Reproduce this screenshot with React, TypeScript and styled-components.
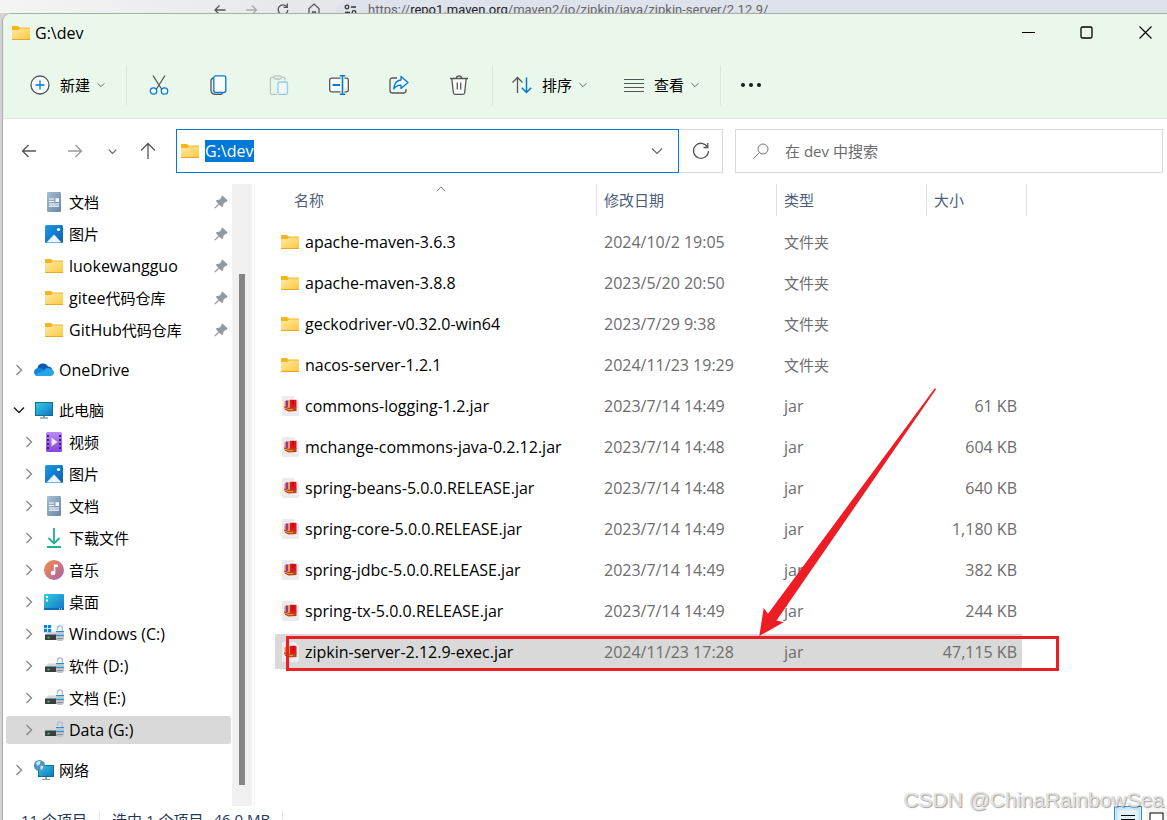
import React from 'react';
import styled, { createGlobalStyle } from 'styled-components';

const Global = createGlobalStyle`
  * { box-sizing: border-box; }
  body { margin: 0; }
  body, button, input {
    font-family: "Open Sans", "Noto Sans CJK SC", sans-serif;
    font-size: 16px;
    color: #000;
  }
  button { border: 0; background: none; padding: 0; }
`;

const blue = '#0078d4';

/* ---------- layout ---------- */

const Desktop = styled.div`
  position: relative;
  height: 100vh;
  overflow: hidden;
  background: #d3d3d3;
`;

const BrowserStrip = styled.div`
  display: flex;
  align-items: flex-start;
  height: 13px;
  overflow: hidden;
  padding-left: 212px;
  background: linear-gradient(90deg, #f4f4f4, #e6e7ea 320px);
`;

const BrowserIcon = styled.span`
  display: flex;
  flex: none;
  width: 31px;
  height: 18px;
`;

const BrowserAddress = styled.div`
  display: flex;
  flex: 1;
  align-items: flex-start;
  gap: 8px;
  padding-left: 6px;
  height: 24px;
  border-radius: 12px 0 0 12px;
  background: #dee2eb;
`;

const BrowserUrl = styled.span`
  font-family: Roboto, sans-serif;
  font-size: 13px;
  line-height: 20px;
  color: #666;
  b { font-weight: 400; color: #222; }
`;

const Window = styled.main`
  display: flex;
  flex-direction: column;
  min-height: 100vh;
  margin-left: 2px;
  border: 1px solid #a9aeaa;
  border-right: 0;
  border-radius: 9px 0 0 0;
  background: #fff;
  overflow: hidden;
`;

const TitleBar = styled.header`
  display: flex;
  align-items: center;
  height: 37px;
  padding-left: 9px;
  gap: 5px;
  background: #eaf8eb;
`;

const Title = styled.h1`
  flex: 1;
  margin: 0;
  font-size: 16px;
  font-weight: 400;
  line-height: 22px;
`;

const CaptionButtons = styled.div`
  display: flex;
`;

const CaptionButton = styled.button`
  display: grid;
  place-items: center;
  width: 58px;
  height: 36px;
  &:last-child { width: 52px; padding-left: 8px; }
`;

const Toolbar = styled.div`
  display: flex;
  align-items: center;
  height: 68px;
  padding-left: 10px;
  background: #eaf8eb;
  border-bottom: 1px solid #dbe8dc;
`;

const MenuButton = styled.button`
  display: flex;
  align-items: center;
  height: 40px;
  padding: 0 18px 0 17px;
  & + & { margin-left: 2px; }
`;

const MenuLabel = styled.span`
  margin: 0 7px 0 10px;
  font-size: 15px;
`;

const ToolButton = styled.button<{ $narrow?: boolean }>`
  display: grid;
  place-items: center;
  width: ${p => (p.$narrow ? 56 : 60)}px;
  height: 40px;
`;

const Separator = styled.span`
  width: 1px;
  height: 40px;
  margin: 0 2px 0 3px;
  background: #d9e6da;
`;

const NavBar = styled.div`
  display: flex;
  align-items: center;
  padding: 10px 4px 11px 5px;
`;

const NavButton = styled.button<{ $width: number }>`
  display: grid;
  place-items: center;
  width: ${p => p.$width}px;
  height: 40px;
`;

const AddressBox = styled.div`
  display: flex;
  flex: 503 1 503px;
  align-items: center;
  height: 44px;
  margin-left: 4px;
  padding: 0 15px 0 4px;
  border: 1px solid ${blue};
`;

const AddressInput = styled.input`
  width: 49px;
  height: 22px;
  margin: 0 auto 0 6px;
  padding: 0;
  border: 0;
  outline: 0;
  color: #fff;
  background: #0078d7;
`;

const RefreshButton = styled.button`
  display: grid;
  place-items: center;
  width: 44px;
  height: 44px;
  margin-right: 12px;
  border: 1px solid #d9d9d9;
  border-left: 0;
`;

const SearchBox = styled.label`
  display: flex;
  flex: 428 1 428px;
  align-items: center;
  gap: 16px;
  height: 44px;
  padding: 0 17px;
  border: 1px solid #d9d9d9;
`;

const SearchInput = styled.input`
  flex: 1;
  min-width: 0;
  padding: 0;
  border: 0;
  outline: 0;
  font-size: 15px;
  &::placeholder { color: #6b6b6b; opacity: 1; }
`;

const Content = styled.div`
  display: flex;
  flex: 1;
`;

const Sidebar = styled.nav`
  display: flex;
  width: 252px;
  border-right: 1px solid #f5f5f5;
`;

const Tree = styled.ul`
  flex: 1;
  margin: 0;
  padding: 4px 1px 0 3px;
  list-style: none;
`;

const TreeItem = styled.li<{ $group?: boolean }>`
  margin: ${p => (p.$group ? '12px' : '4px')} 0 0;
  &:first-child { margin-top: 0; }
`;

const TreeLink = styled.a<{ $root?: boolean; $selected?: boolean }>`
  display: flex;
  align-items: center;
  height: 28px;
  padding: 0 3px 0 ${p => (p.$root ? 7 : 17)}px;
  border-radius: 3px;
  color: #000;
  text-decoration: none;
  white-space: nowrap;
  background: ${p => (p.$selected ? '#d9d9d9' : 'transparent')};
`;

const ChevronSlot = styled.span`
  display: grid;
  place-items: center;
  width: 12px;
  margin-right: 9px;
`;

const IconSlot = styled.span`
  display: grid;
  place-items: center;
  width: 20px;
  margin-right: 5px;
`;

const TreeText = styled.span`
  flex: 1;
  line-height: 22px;
`;

const ScrollTrack = styled.div`
  display: flex;
  width: 20px;
  margin-right: 2px;
  padding: 90px 7px 21px;
  background: #f0f0f0;
`;

const ScrollThumb = styled.div`
  flex: 1;
  background: #858585;
`;

const FilePane = styled.section`
  flex: 1;
  min-width: 0;
  padding-left: 20px;
`;

const TableWrap = styled.div`
  position: relative;
  width: 752px;
`;

const FileTable = styled.table`
  width: 100%;
  table-layout: fixed;
  border-spacing: 0;
  white-space: nowrap;
`;

const HeadCell = styled.th<{ $width: number }>`
  position: relative;
  width: ${p => p.$width}px;
  padding: 0 0 6px;
  text-align: left;
`;

const HeadLabel = styled.div<{ $indent: number }>`
  height: 32px;
  padding-left: ${p => p.$indent}px;
  border-right: 1px solid #e2e2e2;
  font-size: 15px;
  font-weight: 400;
  line-height: 32px;
  color: #4c607a;
`;

const SortMark = styled.span`
  position: absolute;
  top: 0;
  left: 0;
  right: -10px;
  display: flex;
  justify-content: center;
`;

const Cell = styled.td<{ $right?: boolean }>`
  height: 41px;
  padding: 0 ${p => (p.$right ? 5 : 0)}px 0 7px;
  border: 0 solid transparent;
  border-width: 2px ${p => (p.$right ? 5 : 0)}px 4px 0;
  background-clip: padding-box;
  text-align: ${p => (p.$right ? 'right' : 'left')};
  line-height: 22px;
  color: #6d6d6d;
`;

const Row = styled.tr<{ $selected?: boolean }>`
  ${Cell} { background-color: ${p => (p.$selected ? '#d9d9d9' : 'transparent')}; }
  ${Cell}:first-child { border-radius: 3px 0 0 3px; }
`;

const FileName = styled.span`
  display: flex;
  align-items: center;
  gap: 6px;
  margin-left: -1px;
  color: #000;
`;

const FileIcon = styled.span`
  display: flex;
  align-items: flex-start;
  justify-content: center;
  width: 18px;
`;

const HighlightBox = styled.div`
  position: absolute;
  left: 11px;
  top: 452px;
  width: 773px;
  height: 35px;
  border: 3px solid #ee1c25;
`;

const Arrow = styled.svg`
  position: absolute;
  left: 483px;
  top: 202px;
`;

const StatusBar = styled.footer`
  display: flex;
  align-items: center;
  height: 26px;
  padding-left: 18px;
  font-size: 15px;
  color: #1e395b;
`;

const StatusPart = styled.span`
  margin-right: 10px;
`;

const StatusDivider = styled.span`
  width: 1px;
  height: 16px;
  margin: 0 12px 0 2px;
  background: #e4e4e4;
`;

const ViewButtons = styled.div`
  display: flex;
  gap: 4px;
  align-self: stretch;
  margin-left: auto;
`;

const ViewButton = styled.button<{ $active?: boolean }>`
  display: grid;
  place-items: center;
  width: ${p => (p.$active ? 28 : 21)}px;
  border: ${p => (p.$active ? '1px solid #2a94d6' : '0')};
  background: ${p => (p.$active ? '#cce8f6' : '#f5f5f5')};
`;

const Watermark = styled.div`
  position: absolute;
  right: 3px;
  bottom: 7px;
  font-family: "Liberation Sans", sans-serif;
  font-size: 21px;
  line-height: 26px;
  color: rgba(235, 235, 235, 0.9);
  text-shadow: 1px 1px 1px rgba(0, 0, 0, 0.35), 0 0 1px rgba(0, 0, 0, 0.25);
  pointer-events: none;
`;

/* ---------- icons ---------- */

const FolderIcon = () => (
  <svg width="18" height="16" viewBox="0 0 18 16">
    <defs>
      <linearGradient id="folder" x1="0" y1="0" x2="1" y2="1">
        <stop offset="0" stopColor="#ffe9a8" />
        <stop offset="1" stopColor="#ffc938" />
      </linearGradient>
    </defs>
    <path d="M0 1.5Q0 1 .6 1H6l1.6 1.6H17.4q.6 0 .6.6V8H0z" fill="#f7b51c" />
    <path d="M0 5h6.4L8 3.6h10V14.4q0 .6-.6.6H.6q-.6 0-.6-.6z" fill="url(#folder)" />
    <path d="M0 14h18v.5q0 .5-.6.5H.6q-.6 0-.6-.5z" fill="#e8a52a" />
  </svg>
);

const JarIcon = () => (
  <svg width="18" height="20" viewBox="0 0 18 20">
    <path d="M2 0h11l5 5v13.500q0 1.500-1.500 1.500h-14Q1 20 1 18.500V1.500Q1 0 2 0z" fill="#ececee" />
    <path d="M13 0v5h5z" fill="#fbfbfb" />
    <path d="M3.500 5.500L6 4v8.500l-2.500-.5z" fill="#e9882c" />
    <path d="M5 4.500h2.500v7H5z" fill="#8f2fc4" />
    <path d="M7.500 4h2v8h-2z" fill="#f0a83a" />
    <path d="M9 3.800h6.500V12H9z" fill="#e3141c" />
    <path d="M11.500 4v4.500h1.500V4z" fill="#a80f1b" />
    <path d="M3 10.500l4 1.300 8.500-.5V15l-8 .5L4 13.800z" fill="#b9441d" />
    <path d="M4 12.300l4 1.400 4-.3" stroke="#f6a12a" fill="none" />
  </svg>
);

const DocumentIcon = () => (
  <svg width="14" height="20" viewBox="0 0 14 20">
    <defs>
      <linearGradient id="doc" x1="0" y1="0" x2="1" y2="1">
        <stop offset="0" stopColor="#a9bfd3" />
        <stop offset="1" stopColor="#6685a5" />
      </linearGradient>
    </defs>
    <rect width="14" height="20" rx="1.200" fill="url(#doc)" />
    <path d="M2 7h5M2 9.500h5M2 12h10M2 14.200h10" stroke="#fff" strokeWidth="1.200" />
    <rect x="8.500" y="6.300" width="3.500" height="3.700" fill="#fff" />
  </svg>
);

const PictureIcon = () => (
  <svg width="18" height="18" viewBox="0 0 18 18">
    <defs>
      <linearGradient id="pic" x1="0" y1="0" x2="1" y2="1">
        <stop offset="0" stopColor="#1d9be6" />
        <stop offset="1" stopColor="#0b5eb3" />
      </linearGradient>
    </defs>
    <rect width="18" height="18" rx="1.500" fill="url(#pic)" />
    <path d="M1.500 17.500L9 9.500l7.500 8z" fill="#eaf5fd" />
    <circle cx="13.500" cy="4.500" r="1.600" fill="#fff" />
  </svg>
);

const VideoIcon = () => (
  <svg width="16" height="20" viewBox="0 0 16 20">
    <defs>
      <linearGradient id="vid" x1="0" y1="0" x2="0" y2="1">
        <stop offset="0" stopColor="#b98af5" />
        <stop offset="1" stopColor="#8344dc" />
      </linearGradient>
    </defs>
    <rect width="16" height="20" rx="1.500" fill="url(#vid)" />
    <path d="M2 3v15M14 3v15" stroke="#40206f" strokeWidth="2" strokeDasharray="2 2" />
    <path d="M5.500 5.500v9L11.500 10z" fill="#f1e8fd" />
  </svg>
);

const DownloadIcon = () => (
  <svg width="16" height="20" viewBox="0 0 16 20" fill="none" stroke="#1fb28e" strokeWidth="1.800">
    <path d="M8 0v15.500M2.500 10L8 15.500 13.500 10M1 19h14" />
  </svg>
);

const MusicIcon = () => (
  <svg width="20" height="20" viewBox="0 0 20 20">
    <defs>
      <linearGradient id="mus" x1="0" y1="0" x2="1" y2="1">
        <stop offset=".1" stopColor="#f2894f" />
        <stop offset="1" stopColor="#a55fb5" />
      </linearGradient>
    </defs>
    <circle cx="10" cy="10" r="10" fill="url(#mus)" />
    <circle cx="9" cy="13" r="2.300" fill="#fff" />
    <path d="M9.800 4.500h4v2.600h-2.500V13H9.800z" fill="#fff" />
  </svg>
);

const DesktopIcon = () => (
  <svg width="20" height="16" viewBox="0 0 20 16">
    <defs>
      <linearGradient id="desk" x1="0" y1="0" x2="1" y2="1">
        <stop offset="0" stopColor="#33cfe0" />
        <stop offset="1" stopColor="#1171c6" />
      </linearGradient>
    </defs>
    <rect width="20" height="16" rx="1" fill="url(#desk)" />
    <path d="M2 2h2v2H2zM2 5.500h2v2H2z" fill="#fff" />
    <path d="M0 15h20" stroke="#0e5fa5" strokeWidth="1.500" />
    <path d="M15 15h1M17 15h1" stroke="#fff" />
  </svg>
);

const ComputerIcon = () => (
  <svg width="18" height="17" viewBox="0 0 18 17">
    <rect x=".5" y=".5" width="17" height="13" fill="url(#desk)" stroke="#176a90" />
    <path d="M8 14h2v1.500H8z" fill="#8aa0ad" />
    <path d="M5 16h8" stroke="#5f6f79" />
  </svg>
);

const NetworkIcon = () => (
  <svg width="20" height="20" viewBox="0 0 20 20">
    <rect x="4.500" y="5.500" width="15" height="11" fill="url(#desk)" stroke="#176a90" />
    <path d="M11 17h2v2h-2z" fill="#8aa0ad" />
    <path d="M8 19.500h8" stroke="#8aa0ad" />
    <circle cx="5.500" cy="5.500" r="5.500" fill="#4c93be" />
    <path d="M2 3q2-2.500 4.500-2l-.5 3-2.500 2zM6.500 5.500l3 .5-1 3-2 1z" fill="#cfe6f2" />
  </svg>
);

const CloudIcon = () => (
  <svg width="20" height="14" viewBox="0 0 20 14">
    <path d="M4 13a4 4 0 0 1-.6-7.700A5.600 5.600 0 0 1 14 3.600 5 5 0 0 1 16 13z" fill="#0a5fb4" />
    <path d="M3.500 5.200Q6 4.500 8 5.800l5 3L3 13A4 4 0 0 1 3.500 5.200z" fill="#1585d8" />
    <path d="M10 7.500q2.500-3.500 6-2 4 1 4 4.500-.5 3-4 3H4q-2 0-3-1.500z" fill="#28a3ea" />
  </svg>
);

const DriveIcon = ({ system }: { system?: boolean }) => (
  <svg width="20" height="18" viewBox="0 0 20 18">
    <path d="M4 6.500h11l2 3.500H1z" fill="#d5d8da" />
    <rect x="1" y="9.500" width="17" height="5.500" rx=".6" fill="#3c3f42" />
    <rect x="3.500" y="11.800" width="2" height="1.500" fill="#39e05a" />
    <path d="M13.500 5V3.500q0-2.500 2.500-2.500T18.300 3.300V6" fill="none" stroke="#b4bec8" strokeWidth="1.500" />
    <rect x="12" y="6" width="8" height="10" rx="3" fill="#b9c4cd" />
    <path d="M12 6.500h8M12 10.500h8" stroke="#1f8fd8" />
    <path d="M13 13.500h6" stroke="#8897a4" />
    {system && <path d="M0 0h3.200v3.200H0zM4 0h3.200v3.200H4zM0 4h3.200v3.200H0zM4 4h3.200v3.200H4z" fill="#0b87d8" />}
  </svg>
);

const PinIcon = () => (
  <svg width="14" height="14" viewBox="0 0 14 14">
    <path d="M8.300.500L13.500 5.200 12.800 6.800 11.300 7 9.300 9.200 8.800 11.700 7.800 12 5.300 9.700 1.200 13.600.400 12.800 4.300 8.700 2 6.200 2.300 5.300 5 4.700 7.300 2.900 7.400 1.200z" fill="#8d99a3" />
  </svg>
);

const Chevron = ({ d, color = '#666', size = 12, width = 1.2 }: { d: 'right' | 'down' | 'up'; color?: string; size?: number; width?: number }) => {
  const paths = { right: 'M3.500 1l5 5-5 5', down: 'M1 3.500l5 5 5-5', up: 'M1 8.500l5-5 5 5' };
  return (
    <svg width={size} height={size} viewBox="0 0 12 12" fill="none" stroke={color} strokeWidth={width}>
      <path d={paths[d]} />
    </svg>
  );
};

const Glyph = ({ children, size = 20 }: { children: React.ReactNode; size?: number }) => (
  <svg width={size} height={size} viewBox={`0 0 ${size} ${size}`} fill="none" stroke="#555" strokeWidth="1.300">
    {children}
  </svg>
);

/* ---------- data ---------- */

type Node = { text: string; icon: React.ReactNode; pin?: boolean; root?: boolean; open?: boolean; group?: boolean; selected?: boolean };

const nodes: Node[] = [
  { text: '文档', icon: <DocumentIcon />, pin: true },
  { text: '图片', icon: <PictureIcon />, pin: true },
  { text: 'luokewangguo', icon: <FolderIcon />, pin: true },
  { text: 'gitee代码仓库', icon: <FolderIcon />, pin: true },
  { text: 'GitHub代码仓库', icon: <FolderIcon />, pin: true },
  { text: 'OneDrive', icon: <CloudIcon />, root: true, group: true },
  { text: '此电脑', icon: <ComputerIcon />, root: true, group: true, open: true },
  { text: '视频', icon: <VideoIcon /> },
  { text: '图片', icon: <PictureIcon /> },
  { text: '文档', icon: <DocumentIcon /> },
  { text: '下载文件', icon: <DownloadIcon /> },
  { text: '音乐', icon: <MusicIcon /> },
  { text: '桌面', icon: <DesktopIcon /> },
  { text: 'Windows (C:)', icon: <DriveIcon system /> },
  { text: '软件 (D:)', icon: <DriveIcon /> },
  { text: '文档 (E:)', icon: <DriveIcon /> },
  { text: 'Data (G:)', icon: <DriveIcon />, selected: true },
  { text: '网络', icon: <NetworkIcon />, root: true, group: true },
];

const files: [string, string, string, string][] = [
  ['apache-maven-3.6.3', '2024/10/2 19:05', '文件夹', ''],
  ['apache-maven-3.8.8', '2023/5/20 20:50', '文件夹', ''],
  ['geckodriver-v0.32.0-win64', '2023/7/29 9:38', '文件夹', ''],
  ['nacos-server-1.2.1', '2024/11/23 19:29', '文件夹', ''],
  ['commons-logging-1.2.jar', '2023/7/14 14:49', 'jar', '61 KB'],
  ['mchange-commons-java-0.2.12.jar', '2023/7/14 14:48', 'jar', '604 KB'],
  ['spring-beans-5.0.0.RELEASE.jar', '2023/7/14 14:48', 'jar', '640 KB'],
  ['spring-core-5.0.0.RELEASE.jar', '2023/7/14 14:49', 'jar', '1,180 KB'],
  ['spring-jdbc-5.0.0.RELEASE.jar', '2023/7/14 14:49', 'jar', '382 KB'],
  ['spring-tx-5.0.0.RELEASE.jar', '2023/7/14 14:49', 'jar', '244 KB'],
  ['zipkin-server-2.12.9-exec.jar', '2024/11/23 17:28', 'jar', '47,115 KB'],
];

const Chinese = styled.span`
  font-size: 15px;
  line-height: 20px;
`;

/* Chinese characters run one pixel smaller than the Latin letters beside them. */
const Mixed = ({ text }: { text: string }) => (
  <>
    {text.split(/([\u4e00-\u9fff]+)/).map((part, i) => (i % 2 ? <Chinese key={i}>{part}</Chinese> : part))}
  </>
);

export default function App() {
  return (
    <Desktop>
      <Global />
      <BrowserStrip>
        <BrowserIcon><Glyph size={18}><path d="M13.500 10H3M7.500 5.500L3 10l4.500 4.500" /></Glyph></BrowserIcon>
        <BrowserIcon><Glyph size={18}><path d="M3 10h10.500M9 5.500l4.500 4.500L9 14.500" stroke="#aaa" /></Glyph></BrowserIcon>
        <BrowserIcon><Glyph size={18}><path d="M13 7a4.800 4.800 0 1 0 .8 3M13.300 3.500V7.300H9.500" /></Glyph></BrowserIcon>
        <BrowserIcon><Glyph size={18}><path d="M4 17V8.500L9 4l5 4.500V17M7.500 17v-5h3v5" /></Glyph></BrowserIcon>
        <BrowserAddress>
          <Glyph size={18}>
            <circle cx="5" cy="7" r="1.800" stroke="#333" />
            <path d="M9 7h5M3 12.500h5" stroke="#333" strokeWidth="1.500" />
            <circle cx="12" cy="12.500" r="1.800" stroke="#333" />
          </Glyph>
          <BrowserUrl>https://<b>repo1.maven.org</b>/maven2/io/zipkin/java/zipkin-server/2.12.9/</BrowserUrl>
        </BrowserAddress>
      </BrowserStrip>

      <Window>
        <TitleBar>
          <FolderIcon />
          <Title>G:\dev</Title>
          <CaptionButtons>
            <CaptionButton aria-label="最小化"><svg width="13" height="13"><path d="M0 6.500h13" stroke="#000" /></svg></CaptionButton>
            <CaptionButton aria-label="最大化"><svg width="13" height="13"><rect x="1" y="1" width="11" height="11" rx="1.500" fill="none" stroke="#000" strokeWidth="1.300" /></svg></CaptionButton>
            <CaptionButton aria-label="关闭"><svg width="13" height="13"><path d="M.5.500l12 12M12.500.500l-12 12" stroke="#000" strokeWidth="1.200" /></svg></CaptionButton>
          </CaptionButtons>
        </TitleBar>

        <Toolbar>
          <MenuButton>
            <Glyph>
              <circle cx="10" cy="10" r="9" fill="#fafdff" />
              <path d="M10 5.500v9M5.500 10h9" stroke={blue} />
            </Glyph>
            <MenuLabel>新建</MenuLabel>
            <Chevron d="down" size={8} width={1.5} />
          </MenuButton>
          <Separator />
          <ToolButton aria-label="剪切">
            <Glyph>
              <path d="M4 .500l8.500 13.500M16 .500L7.500 14" />
              <circle cx="4.500" cy="16" r="3.200" stroke={blue} fill="#fafdff" />
              <circle cx="15.500" cy="16" r="3.200" stroke={blue} fill="#fafdff" />
            </Glyph>
          </ToolButton>
          <ToolButton aria-label="复制">
            <Glyph>
              <path d="M4.500 3Q2 3.500 2 6v9q0 4.400 4.400 4.400H11q2 0 2.600-1.400" />
              <rect x="4.800" y=".8" width="12" height="16.700" rx="2" stroke={blue} fill="#fafdff" />
            </Glyph>
          </ToolButton>
          <ToolButton aria-label="粘贴" disabled>
            <Glyph>
              <path d="M8 19.300H3q-1.600 0-1.600-1.600V4Q1.400 2.400 3 2.400h2M12 2.400h2.500Q16 2.400 16 4v1.500" stroke="#bcc4be" />
              <rect x="5" y=".8" width="7.500" height="3.200" rx="1.400" stroke="#bcc4be" />
              <rect x="9" y="7" width="9.500" height="12.300" rx="1.500" stroke="#95cbe8" fill="#eef8fb" />
            </Glyph>
          </ToolButton>
          <ToolButton aria-label="重命名">
            <Glyph>
              <path d="M11.500 3.200H2.500Q.7 3.200.7 5v10q0 1.800 1.800 1.800h9M15.500 3.200h2q1.800 0 1.800 1.800v10q0 1.800-1.800 1.800h-2" fill="#fafdff" />
              <path d="M13.500.800v18.400M10.800.800h5.400M10.800 19.200h5.400" stroke={blue} strokeWidth="1.500" />
              <path d="M3.500 10h7.500" stroke={blue} strokeWidth="2" />
            </Glyph>
          </ToolButton>
          <ToolButton aria-label="共享">
            <Glyph>
              <path d="M8 3H3.500Q1 3 1 5.500v10Q1 18 3.500 18h11q2.500 0 2.500-2.500V14" />
              <path d="M12 1.500L19 7.500 12 13.500V10.200Q7.500 10 4.800 14 5.500 5.500 12 5z" stroke={blue} fill="#fafdff" strokeLinejoin="round" />
            </Glyph>
          </ToolButton>
          <ToolButton aria-label="删除">
            <Glyph>
              <path d="M2.800 3.500l1.500 14Q4.500 19.300 6 19.300h8q1.500 0 1.700-1.800l1.500-14" fill="#f8fbf8" />
              <path d="M1 3.500h18M7.300 3.300Q7.500.900 10 .900t2.700 2.400M8.300 7.500v7M11.700 7.500v7" />
            </Glyph>
          </ToolButton>
          <Separator />
          <MenuButton>
            <Glyph>
              <path d="M5.500 18V2.500M.5 7.500l5-5 5 5" />
              <path d="M14.500 2.500v15M9.800 12.800l4.700 4.700 4.700-4.700" stroke={blue} strokeWidth="1.500" />
            </Glyph>
            <MenuLabel>排序</MenuLabel>
            <Chevron d="down" size={8} width={1.5} />
          </MenuButton>
          <MenuButton>
            <Glyph><path d="M0 4.500h20M0 8.500h20M0 12.500h20M0 16.500h20" strokeWidth="1" /></Glyph>
            <MenuLabel>查看</MenuLabel>
            <Chevron d="down" size={8} width={1.5} />
          </MenuButton>
          <Separator />
          <ToolButton $narrow aria-label="更多">
            <svg width="22" height="6" fill="#1b1b1b"><circle cx="3" cy="3" r="2" /><circle cx="11" cy="3" r="2" /><circle cx="19" cy="3" r="2" /></svg>
          </ToolButton>
        </Toolbar>

        <NavBar>
          <NavButton $width={42} aria-label="后退"><Glyph size={16}><path d="M15 8H1.500M7.500 2l-6 6 6 6" /></Glyph></NavButton>
          <NavButton $width={50} aria-label="前进"><Glyph size={16}><path d="M1 8h13.500M8.500 2l6 6-6 6" stroke="#999" /></Glyph></NavButton>
          <NavButton $width={24} aria-label="最近浏览的位置"><Chevron d="down" size={9} width={1.700} /></NavButton>
          <NavButton $width={48} aria-label="上移"><Glyph size={18}><path d="M9 17V1.500M2 8.500l7-7 7 7" /></Glyph></NavButton>
          <AddressBox>
            <FolderIcon />
            <AddressInput aria-label="地址" defaultValue="G:\dev" />
            <Chevron d="down" />
          </AddressBox>
          <RefreshButton aria-label="刷新">
            <Glyph size={18}><path d="M15.500 5A7.500 7.500 0 1 0 16.500 9M15.800 1v4.500H11.500" /></Glyph>
          </RefreshButton>
          <SearchBox>
            <Glyph size={16}><circle cx="10" cy="6" r="5" stroke="#777" strokeWidth="1" /><path d="M6.500 9.500L.5 15.500" stroke="#777" strokeWidth="1" /></Glyph>
            <SearchInput type="search" aria-label="搜索" placeholder="在 dev 中搜索" />
          </SearchBox>
        </NavBar>

        <Content>
          <Sidebar>
            <Tree>
              {nodes.map((n, i) => (
                <TreeItem key={i} $group={n.group}>
                  <TreeLink href="#" $root={n.root} $selected={n.selected}>
                    <ChevronSlot>
                      {!n.pin && (n.open ? <Chevron d="down" color="#222" width={1.5} /> : <Chevron d="right" color="#888" width={1.400} />)}
                    </ChevronSlot>
                    <IconSlot>{n.icon}</IconSlot>
                    <TreeText><Mixed text={n.text} /></TreeText>
                    {n.pin && <PinIcon />}
                  </TreeLink>
                </TreeItem>
              ))}
            </Tree>
            <ScrollTrack><ScrollThumb /></ScrollTrack>
          </Sidebar>

          <FilePane>
            <TableWrap>
              <FileTable>
                <thead>
                  <tr>
                    <HeadCell $width={322}>
                      <SortMark><Chevron d="up" size={10} width={1} /></SortMark>
                      <HeadLabel $indent={19}>名称</HeadLabel>
                    </HeadCell>
                    <HeadCell $width={180}><HeadLabel $indent={7}>修改日期</HeadLabel></HeadCell>
                    <HeadCell $width={150}><HeadLabel $indent={7}>类型</HeadLabel></HeadCell>
                    <HeadCell $width={100}><HeadLabel $indent={7}>大小</HeadLabel></HeadCell>
                  </tr>
                </thead>
                <tbody>
                  {files.map(([name, date, type, size], i) => (
                    <Row key={name} $selected={i === files.length - 1}>
                      <Cell>
                        <FileName>
                          <FileIcon>{size ? <JarIcon /> : <FolderIcon />}</FileIcon>
                          <span>{name}</span>
                        </FileName>
                      </Cell>
                      <Cell>{date}</Cell>
                      <Cell><Mixed text={type} /></Cell>
                      <Cell $right>{size}</Cell>
                    </Row>
                  ))}
                </tbody>
              </FileTable>
              <HighlightBox />
              <Arrow width="180" height="252" viewBox="758 386 180 252">
                <path d="M759.300 636L763.700 608 768 613.700 934.800 388.300 936.200 389 776.500 620.500 783.700 622.300z" fill="#ee1c25" />
              </Arrow>
            </TableWrap>
          </FilePane>
        </Content>

        <StatusBar>
          <StatusPart>11 个项目</StatusPart>
          <StatusDivider />
          <StatusPart>选中 1 个项目</StatusPart>
          <StatusPart>46.0 MB</StatusPart>
          <StatusDivider />
          <ViewButtons>
            <ViewButton $active aria-label="详细信息">
              <svg width="20" height="18"><rect width="20" height="18" rx="2" fill="#e3f1f9" /><path d="M3 5.500h14M3 9.500h14M3 13.500h14" stroke="#000" /></svg>
            </ViewButton>
            <ViewButton aria-label="大图标">
              <svg width="16" height="14"><rect x="1" y="1" width="13" height="12" fill="#fff" stroke="#000" /></svg>
            </ViewButton>
          </ViewButtons>
        </StatusBar>
      </Window>
      <Watermark>CSDN @ChinaRainbowSea</Watermark>
    </Desktop>
  );
}
